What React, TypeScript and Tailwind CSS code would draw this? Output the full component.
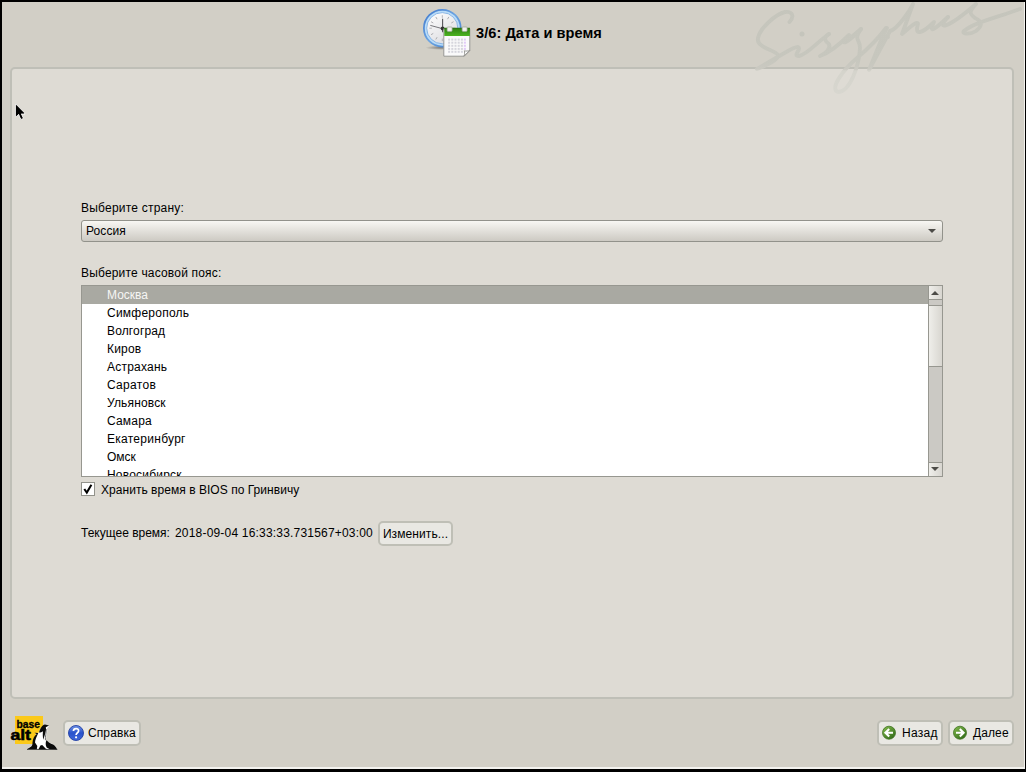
import type { ReactNode } from 'react';

const zones = [
  { name: 'Москва', tracking: 'tracking-normal' },
  { name: 'Симферополь', tracking: 'tracking-[0.24px]' },
  { name: 'Волгоград', tracking: 'tracking-[0.14px]' },
  { name: 'Киров', tracking: 'tracking-[0.2px]' },
  { name: 'Астрахань', tracking: 'tracking-[0.22px]' },
  { name: 'Саратов', tracking: 'tracking-[0.3px]' },
  { name: 'Ульяновск', tracking: 'tracking-[0.15px]' },
  { name: 'Самара', tracking: 'tracking-[0.2px]' },
  { name: 'Екатеринбург', tracking: 'tracking-[0.27px]' },
  { name: 'Омск', tracking: 'tracking-normal' },
  { name: 'Новосибирск', tracking: 'tracking-[0.2px]' },
];

function ClockIcon() {
  const ticks = Array.from({ length: 12 }, (_, i) => i * 30);
  return (
    <svg className="h-[52px] w-[52px] shrink-0" viewBox="0.7 0.8 52 52">
      <defs>
        <linearGradient id="rim" x1="0" y1="0" x2="1" y2="1">
          <stop offset="0" stopColor="#3f78cc" />
          <stop offset="0.5" stopColor="#6da5e2" />
          <stop offset="1" stopColor="#3b76c4" />
        </linearGradient>
        <linearGradient id="face" x1="0" y1="0" x2="0.6" y2="1">
          <stop offset="0" stopColor="#ffffff" />
          <stop offset="1" stopColor="#dedee2" />
        </linearGradient>
        <linearGradient id="green" x1="0" y1="0" x2="0" y2="1">
          <stop offset="0" stopColor="#2e7f12" />
          <stop offset="1" stopColor="#4cb321" />
        </linearGradient>
        <radialGradient id="shade">
          <stop offset="0" stopColor="#555" stopOpacity="0.7" />
          <stop offset="1" stopColor="#555" stopOpacity="0" />
        </radialGradient>
      </defs>
      <ellipse cx="21" cy="41.5" rx="16" ry="2.2" fill="url(#shade)" />
      <circle cx="22" cy="22" r="18.4" fill="#b9dcf8" stroke="url(#rim)" strokeWidth="1.8" />
      <circle cx="22" cy="22" r="15.6" fill="url(#face)" stroke="#7fb0e4" strokeWidth="0.9" />
      {ticks.map((a) => (
        <path key={a} d="M22 9v2.6" stroke="#a5a5aa" strokeWidth="0.8" transform={`rotate(${a} 22 22)`} />
      ))}
      <path d="M22.3 26V12.5" stroke="#55555a" strokeWidth="1.1" />
      <path d="M26 23.5L10 19.2" stroke="#77777c" strokeWidth="1" />
      <circle cx="22.3" cy="22.3" r="1.9" fill="#333" />
      <path d="M23.5 22.5h26v22l-5.5 5.5h-20.5z" fill="#fafafa" stroke="#989894" strokeWidth="1" />
      <path d="M24 21.8h25.6v8H24z" fill="url(#green)" />
      <path d="M23.6 22h26" stroke="#286b14" strokeWidth="0.8" />
      <rect x="26.8" y="20.8" width="5" height="4.4" rx="0.8" fill="#f1f1ee" stroke="#9aa294" strokeWidth="0.7" />
      <rect x="41.8" y="20.8" width="5" height="4.4" rx="0.8" fill="#f1f1ee" stroke="#9aa294" strokeWidth="0.7" />
      {[33.4, 36.5, 39.6, 42.7, 45.6].map((y) =>
        [28.8, 32, 35.2, 38.4, 41.6, 44.6].map((x) =>
          x > 44 && y > 43 ? null : (
            <rect key={`${x}-${y}`} x={x - 1} y={y - 1} width="2" height="2" fill={x > 44 ? '#e2caf8' : '#d5d5dc'} />
          ),
        ),
      )}
      <path d="M43.6 50c1-2.2.9-4 .4-5.4 1.9.5 3.9.3 5.5-.5z" fill="#fff" stroke="#8c8c88" strokeWidth="0.9" />
    </svg>
  );
}

function Signature() {
  return (
    <svg className="pointer-events-none absolute right-0 top-0 h-[110px] w-[290px]" viewBox="736 0 290 110">
      <defs>
        <linearGradient id="ink" gradientUnits="userSpaceOnUse" x1="0" y1="0" x2="0" y2="100">
          <stop offset="0" stopColor="#c5c5bc" />
          <stop offset="0.6" stopColor="#c7c7be" />
          <stop offset="0.69" stopColor="#cac9c1" />
          <stop offset="0.71" stopColor="#d5d4cc" />
          <stop offset="1" stopColor="#d8d7d0" />
        </linearGradient>
      </defs>
      <g fill="none" stroke="url(#ink)" strokeWidth="3.9" strokeLinecap="round" strokeLinejoin="round">
        <path d="M789.5 22C795 16 792 11 785 12C776 14 760 28 758 38C756 48 776 50 778 55C779 60 765 66 757 69L781 55C788 51 796 46 798 47C802 49 792 56 799 56C808 54 817 42 829 34" />
        <path d="M829 34C822 38 826 42 829 44C831 49 825 54 820 56C831 52 844 40 849 35C838 47 847 44 861 29" />
        <path d="M861 29C853 41 860 38 860 48C859 66 850 92 838 92C829 89 843 70 857 58C870 47 878 39 886 28L869 70L890 31C898 29 910 10 913 4L902 34C910 27 918 20 918 24C914 36 922 34 934 22C928 35 935 29 948 17" />
        <path d="M948 17C936 30 946 30 976 4C968 12 970 14 975 18C984 22 981 27 976 31C970 35 961 34 964 31C973 23 995 18 1020 9" />
        <path d="M861 29L849 39M887 28L882 37L888 37" />
      </g>
      <circle cx="802" cy="34" r="2.5" fill="#c5c5bc" />
    </svg>
  );
}

function Pointer() {
  return (
    <svg className="absolute left-[15px] top-[103px] h-[18px] w-[12px]" viewBox="0 0 12 18">
      <path d="M.7 1v13.2l3-3 2.2 5.2 2.4-1-2.2-4.4h4z" fill="#000" stroke="#fff" strokeWidth="0.8" />
      <path d="M1 2v11l2.8-2.8 2.4 5.4 1.4-.7-2.2-4.9h3.8z" fill="#000" />
    </svg>
  );
}

function AltLogo() {
  return (
    <svg className="h-[36px] w-[50px] shrink-0" viewBox="0 0 50 36">
      <path d="M5 1h28v28H5z" fill="#fbc919" />
      <text x="6.6" y="13" fontSize="10" fontWeight="700" textLength="23.4" lengthAdjust="spacingAndGlyphs" stroke="#000" strokeWidth="0.3" fontFamily="Liberation Sans, sans-serif">base</text>
      <text x="0.4" y="25" fontSize="14" fontWeight="700" textLength="20.5" lengthAdjust="spacingAndGlyphs" stroke="#000" strokeWidth="0.5" fontFamily="Liberation Sans, sans-serif">alt</text>
      <path d="M17 34.5c1-2 5-3 6-6 0-4 2-6 4-8l-2-2 4-1c1-4 3-7 6-7.5l4 1-2 2.5c1 4-1 7-1 12l4 2.5c4 1 6 4 7 6.5z" fill="#fff" />
      <path d="M29 17.5c1.4-4.5 3.2-7.8 6-8l4 1.1-3.2 1.7c.8 2.7-.5 5-1 7.7l-1.6 4.8c-.4-3.4-.6-6-.2-8.5-1 .8-2.4 1.2-4 1.2z" fill="#0a0a0a" />
      <path d="M22.5 27.5c.3-3.6 1.6-6.5 4.1-8.2l-2.1-1.5 3.8.1c-1.4 3.6-3.4 6.6-3.3 9.7l2.3 3.5-.5 3.2H17l4.2-2.8c1.1-.9 1.3-2.5 1.3-4z" fill="#0a0a0a" />
      <path d="M28.4 34.4l2-4 1.8-.5 3.6 3.9 1.8.6zM36.4 25.3c1.9 1.5 2.6 2.9 4.8 3.4 2.8.8 4.7 2.9 6 5.7l-7.4-.2-3.1-1.7c-1.3-2.3-1.3-4.8-.3-7.2z" fill="#0a0a0a" />
      <path d="M36.2 14c.4 3.6-1.2 7.6-.8 11.2" fill="none" stroke="#333" strokeWidth="0.7" />
      <path d="M17 34.4h30.3" stroke="#222" strokeWidth="0.8" />
    </svg>
  );
}

function HelpIcon() {
  return (
    <svg className="h-4 w-4 shrink-0" viewBox="0 0 16 16">
      <defs>
        <linearGradient id="help" x1="0" y1="0" x2="0" y2="1">
          <stop offset="0" stopColor="#7396e6" />
          <stop offset="0.5" stopColor="#2852cb" />
          <stop offset="1" stopColor="#4068db" />
        </linearGradient>
      </defs>
      <circle cx="8" cy="8" r="7.5" fill="url(#help)" stroke="#2140a4" strokeWidth="0.9" />
      <path d="M5.4 6.1C5.5 2.7 10.8 2.8 10.6 6C10.5 7.7 8.1 7.9 8.1 10" fill="none" stroke="#fff" strokeWidth="1.7" />
      <circle cx="8.1" cy="12.3" r="1.1" fill="#fff" />
    </svg>
  );
}

function ArrowIcon({ next = false }: { next?: boolean }) {
  return (
    <svg className="h-4 w-4 shrink-0" viewBox="0 0 16 16">
      <defs>
        <linearGradient id={next ? 'arrow-next' : 'arrow-back'} x1="0" y1="0" x2="0.8" y2="1">
          <stop offset="0" stopColor="#86bd50" />
          <stop offset="1" stopColor="#326b18" />
        </linearGradient>
      </defs>
      <circle cx="8" cy="7.7" r="6.5" fill={next ? 'url(#arrow-next)' : 'url(#arrow-back)'} stroke="#3c711f" strokeWidth="0.8" />
      <path
        d="M12 7.8H4.8M8.2 4L4.4 7.8l3.8 3.8"
        fill="none"
        stroke="#fff"
        strokeWidth="2.1"
        transform={next ? 'matrix(-1 0 0 1 16 0)' : undefined}
      />
    </svg>
  );
}

function Button({ children, className }: { children: ReactNode; className: string }) {
  return (
    <button className={`flex shrink-0 items-center rounded-[5px] border-2 border-[#bfbfb6] bg-[#e9e8e3] whitespace-nowrap ${className}`}>
      {children}
    </button>
  );
}

function ScrollBar() {
  return (
    <div className="flex w-[14px] shrink-0 flex-col border-l border-[#979790] bg-[#cbc9c4]">
      <div className="flex h-[14px] items-center border-b border-[#979790] bg-linear-to-r from-[#efeeea] to-[#d8d6d0] pt-px pl-[2px]">
        <svg className="h-1 w-2" viewBox="0 0 8 4"><path d="M0 4L4 0l4 4z" fill="#4c4b47" /></svg>
      </div>
      <div className="h-[5px]" />
      <div className="h-[62px] border-y border-[#979790] bg-linear-to-r from-[#efeeea] to-[#d8d6d0]" />
      <div className="flex-1" />
      <div className="flex h-[14px] items-start border-t border-[#979790] bg-linear-to-r from-[#efeeea] to-[#d8d6d0] pt-1 pl-[2px]">
        <svg className="h-1 w-2" viewBox="0 0 8 4"><path d="M0 0h8L4 4z" fill="#4c4b47" /></svg>
      </div>
    </div>
  );
}

export default function App() {
  return (
    <div className="h-[772px] w-[1026px] overflow-hidden border-t-2 border-r border-b-[3px] border-l-2 border-black bg-[#f3f2ee] font-['Liberation_Sans',Arial,sans-serif] text-[12px] leading-[18px] text-black">
      <div className="flex h-[765px] w-[1022px] flex-col bg-[#d2cfc6] pr-[10px] pl-2">
        <header className="flex h-[65px] shrink-0 items-start pt-[5px] pl-[411px]">
          <ClockIcon />
          <h1 className="mt-[16px] ml-[3px] text-[14.6px] leading-[20px] font-bold tracking-[0.04px] whitespace-nowrap">3/6: Дата и время</h1>
        </header>

        <main className="flex h-[632px] shrink-0 flex-col rounded-[5px] border-2 border-[#bfbfb7] bg-[#dedbd4] pt-[130px] pr-[69px] pl-[69px]">
          <label className="h-[21px] shrink-0 tracking-[0.22px]">Выберите страну:</label>
          <div className="flex h-[22px] shrink-0 items-center justify-between rounded-[3px] border border-[#92928b] bg-linear-to-b from-[#f8f7f3] to-[#cdcac3] pr-[6px] pl-1">
            <span className="tracking-[0.08px]">Россия</span>
            <svg className="h-[4px] w-[8px]" viewBox="0 0 8 4"><path d="M0 0h8L4 4z" fill="#4c4b47" /></svg>
          </div>
          <label className="mt-[22px] h-[21px] shrink-0 tracking-[0.18px]">Выберите часовой пояс:</label>
          <div className="flex h-[192px] shrink-0 border border-[#979790] bg-white">
            <ul className="flex-1 overflow-hidden">
              {zones.map(({ name, tracking }, i) => (
                <li key={name} className={`h-[18px] pl-[25px] ${tracking} ${i === 0 ? 'bg-[#a9a9a2] text-[#f6f6f4]' : ''}`}>{name}</li>
              ))}
            </ul>
            <ScrollBar />
          </div>
          <label className="mt-1 flex h-[18px] shrink-0 items-start gap-[6px]">
            <span className="mt-px flex h-[14px] w-[14px] items-center justify-center border border-[#92928b] bg-white">
              <svg className="h-3 w-3" viewBox="0 0 12 12"><path d="M2.3 6L4.8 9.6L9.4 1.8" fill="none" stroke="#000" strokeWidth="2" /></svg>
            </span>
            <span className="tracking-[0.04px]">Хранить время в BIOS по Гринвичу</span>
          </label>
          <div className="mt-[22px] flex h-[25px] shrink-0">
            <span className="mt-[3px] w-[94px] whitespace-nowrap">Текущее время:</span>
            <span className="mt-[3px] w-[203px] tracking-[0.19px] whitespace-nowrap">2018-09-04 16:33:33.731567+03:00</span>
            <Button className="h-[25px] w-[75px] justify-center tracking-[0.1px]">Изменить...</Button>
          </div>
        </main>

        <footer className="flex h-[68px] shrink-0 items-start pt-[16px]">
          <AltLogo />
          <Button className="mt-[5px] ml-[3px] h-[26px] w-[78px] gap-1 pl-[3px] tracking-[0.1px]"><HelpIcon />Справка</Button>
          <div className="mt-[5px] ml-auto flex gap-[5px]">
            <Button className="h-[26px] w-[66px] gap-[5px] pl-[2px] tracking-[0.3px]"><ArrowIcon />Назад</Button>
            <Button className="h-[26px] w-[66px] gap-[5px] pl-[2px] tracking-[0.1px]"><ArrowIcon next />Далее</Button>
          </div>
        </footer>
      </div>
      <Signature />
      <Pointer />
    </div>
  );
}
